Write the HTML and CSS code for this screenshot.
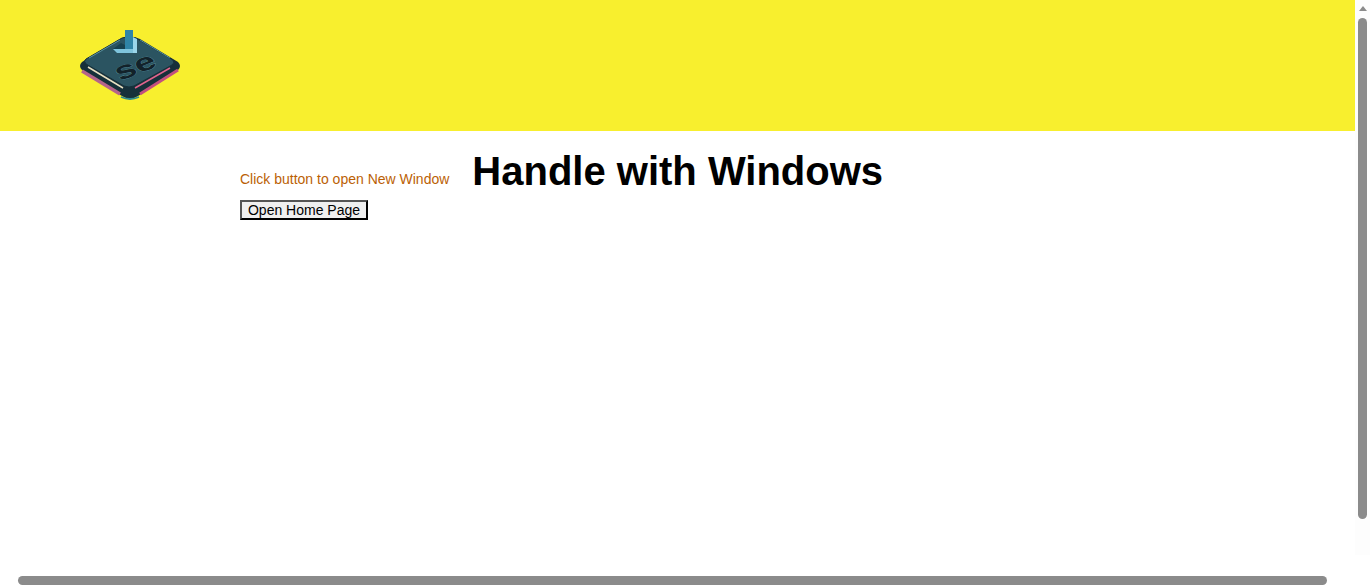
FILE: index.html
```html
<!DOCTYPE html>
<html lang="en">
<head>
    <meta charset="UTF-8">
    <meta name="viewport" content="width=device-width, initial-scale=1.0">
    <title>Handle with Windows</title>
    <link rel="stylesheet" href="styles.css">
</head>
<body>

    <div class="page">
        <div class="header">
            <svg class="logo" width="102" height="72" viewBox="0 0 102 72">
                <!-- base of the tile -->
                <path d="M2 33 L40 10 Q50 5 60 10 L98 33 Q102 37 98 41 L58 67 Q50 72 42 67 L2 41 Q-2 37 2 33 Z" fill="#16303a"/>
                <!-- pink lower edges -->
                <path d="M2 42 L40 65" fill="none" stroke="#b5648a" stroke-width="3.4"/>
                <path d="M60 65 L98 41" fill="none" stroke="#c2507e" stroke-width="3"/>
                <path d="M41 68 Q50 72 59 68" fill="none" stroke="#2f8a90" stroke-width="1.8"/>
                <!-- top face -->
                <path d="M6 30 L42 9 Q49 6 56 9 L93 31 Q95 34 92 36 L54 57 Q49 59 44 57 L6 35 Q3 32 6 30 Z" fill="#2b5461" stroke="#16303a" stroke-width="1"/>
                <path d="M9 29 L40 11 M60 11 L90 29" fill="none" stroke="#5f9aa6" stroke-width="0.9"/>
                <!-- lit rim -->
                <path d="M8 38 L43 59" fill="none" stroke="#e8e0c2" stroke-width="1.5"/>
                <path d="M55 59 L90 39" fill="none" stroke="#e0648c" stroke-width="1.5"/>
                <!-- arrow -->
                <path d="M33 20 L41 14 L45 16 L45 20 Z" fill="#17414f"/>
                <path d="M45 1 L53 1 L53 20 L45 20 Z" fill="#2f84a6"/>
                <path d="M33 20 L53 20 L53 24 L37 24 Z" fill="#7fc4dc"/>
                <path d="M53 8 L57 10 L57 24 L53 24 Z" fill="#9ad6ea"/>
                <text class="logo-text" transform="matrix(1.15 -0.45 0.45 0.72 40 52)">se</text>
            </svg>
        </div>
        <div class="content">
            <div class="title-row">
                <span class="hint">Click button to open New Window</span>
                <h1 class="title">Handle with Windows</h1>
            </div>
            <button class="open-btn">Open Home Page</button>
        </div>
        <div class="h-scroll">
            <div class="h-thumb"></div>
        </div>
    </div>

    <div class="v-scroll">
        <div class="v-arrow"></div>
        <div class="v-thumb"></div>
    </div>

</body>
</html>
```

FILE: styles.css
```css
html, body {
    margin: 0;
    height: 100%;
    overflow: hidden;
}
body {
    display: flex;
    font-family: "Liberation Sans", Arial, sans-serif;
    background-color: #fff;
    color: #000;
}
.page {
    flex: 1;
    display: flex;
    flex-direction: column;
    min-width: 0;
}
.header {
    height: 131px;
    background: #f8ef2e;
    padding: 29px 0 0 80px;
    box-sizing: border-box;
}
.logo {
    display: block;
}
.logo-text {
    font-family: "Liberation Sans", Arial, sans-serif;
    font-size: 30px;
    font-weight: bold;
    fill: #12222a;
    stroke: #5f9aa6;
    stroke-width: 0.6px;
    paint-order: stroke;
}
.content {
    flex: 1;
    padding: 20px 0 0 240px;
}
.title-row {
    display: flex;
    align-items: flex-start;
    gap: 23px;
    height: 49px;
}
.hint {
    margin-top: 20px;
    font-size: 14px;
    color: #bb5f05;
}
.title {
    margin: 0;
    font-size: 40px;
    font-weight: bold;
    line-height: 41px;
}
.open-btn {
    display: block;
    width: 128px;
    height: 20px;
    padding: 0;
    font-family: inherit;
    font-size: 14px;
    color: #000;
    background: #efefef;
    border: 2px outset #000;
}
.h-scroll {
    height: 15px;
    padding: 3px 28px 0 18px;
    box-sizing: border-box;
}
.h-thumb {
    height: 9px;
    background: #8b8b8b;
    border-radius: 5px;
}
.v-scroll {
    width: 15px;
    height: 555px;
    padding: 6px 3px 0;
    box-sizing: border-box;
    background: #fdfdfd;
}
.v-arrow {
    width: 0;
    margin: 0 auto 7px;
    border-left: 4px solid transparent;
    border-right: 4px solid transparent;
    border-bottom: 5px solid #8b8b8b;
}
.v-thumb {
    height: 501px;
    background: #8b8b8b;
    border-radius: 5px;
}
```
